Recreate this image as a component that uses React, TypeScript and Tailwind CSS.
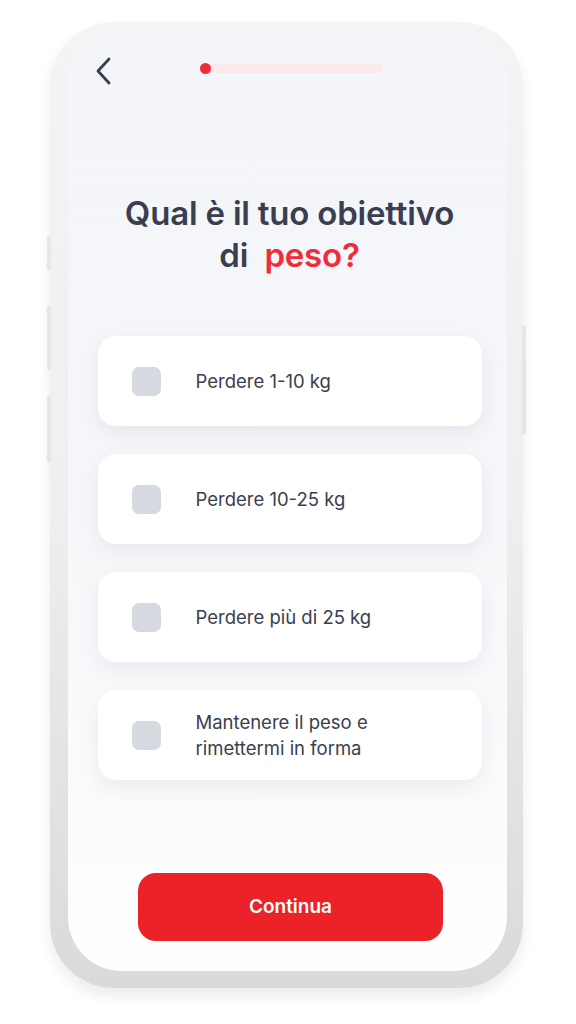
import React from "react";

const options = [
  "Perdere 1-10 kg",
  "Perdere 10-25 kg",
  "Perdere più di 25 kg",
  "Mantenere il peso e rimettermi in forma",
];

export default function App() {
  return (
    <div
      className="w-[576px] h-[1024px] bg-white overflow-hidden pt-[22px] pl-[50px]"
      style={{ fontFamily: "Inter, 'Noto Sans', sans-serif" }}
    >
      <div className="relative w-[473px] h-[966px]">
        {/* side buttons */}
        <div className="absolute left-[-3px] top-[213px] w-[4px] h-[36px] rounded-l bg-[#e6e6e6]" />
        <div className="absolute left-[-3px] top-[283px] w-[4px] h-[66px] rounded-l bg-[#e6e6e6]" />
        <div className="absolute left-[-3px] top-[373px] w-[4px] h-[68px] rounded-l bg-[#e6e6e6]" />
        <div className="absolute right-[-3px] top-[303px] w-[4px] h-[110px] rounded-r bg-[#e6e6e6]" />
        {/* frame */}
        <div className="w-full h-full rounded-[64px] bg-gradient-to-b from-[#f4f4f4] via-[#efefef] to-[#dadada] shadow-[0_8px_14px_rgba(0,0,0,0.08)] pl-[18px] pr-[16px] pt-[5px] pb-[17px]">
          <div className="w-full h-full rounded-[54px] bg-gradient-to-b from-[#f4f5f9] via-[#f6f7fa] to-[#fefefe] flex flex-col items-center">
            {/* header */}
            <div className="w-full flex items-center h-[40px] mt-[21px] px-[24px]">
              <svg width="18" height="28" viewBox="0 0 18 28" className="text-[#3a3f4f] mt-[5px] ml-[2px]">
                <path d="M15 2 L4 14 L15 26" fill="none" stroke="currentColor" strokeWidth="2.8" strokeLinecap="round" strokeLinejoin="round" />
              </svg>
              <div className="ml-[88px] w-[183px] h-[9px] rounded-full bg-[#fbe9ec] relative">
                <div className="absolute left-0 top-[-1px] w-[11px] h-[11px] rounded-full bg-[#ef2d3a]" />
              </div>
            </div>
            {/* title */}
            <h1 className="mt-[104px] pl-[4px] text-center text-[33px] leading-[42px] font-semibold text-[#3a3e4e] tracking-[-0.2px]">
              Qual è il tuo obiettivo
              <br />
              di&nbsp; <span className="text-[#ef2d3a]">peso?</span>
            </h1>
            {/* options */}
            <div className="mt-[60px] pl-[4px] flex flex-col gap-[28px]">
              {options.map((o) => (
                <div
                  key={o}
                  className="w-[384px] h-[90px] bg-white rounded-[18px] shadow-[0_8px_22px_rgba(40,50,80,0.08)] flex items-center pl-[34px] pr-[20px]"
                >
                  <div className="w-[29px] h-[29px] rounded-[7px] bg-[#d6d9e0] shrink-0" />
                  <div className="ml-[35px] text-[18.5px] leading-[26px] text-[#3a3e4e] w-[220px]">{o}</div>
                </div>
              ))}
            </div>
            <div className="flex-1" />
            <button className="mb-[30px] ml-[6px] w-[305px] h-[68px] rounded-[18px] bg-[#ec2229] text-white text-[19px] font-semibold">
              Continua
            </button>
          </div>
        </div>
      </div>
    </div>
  );
}
